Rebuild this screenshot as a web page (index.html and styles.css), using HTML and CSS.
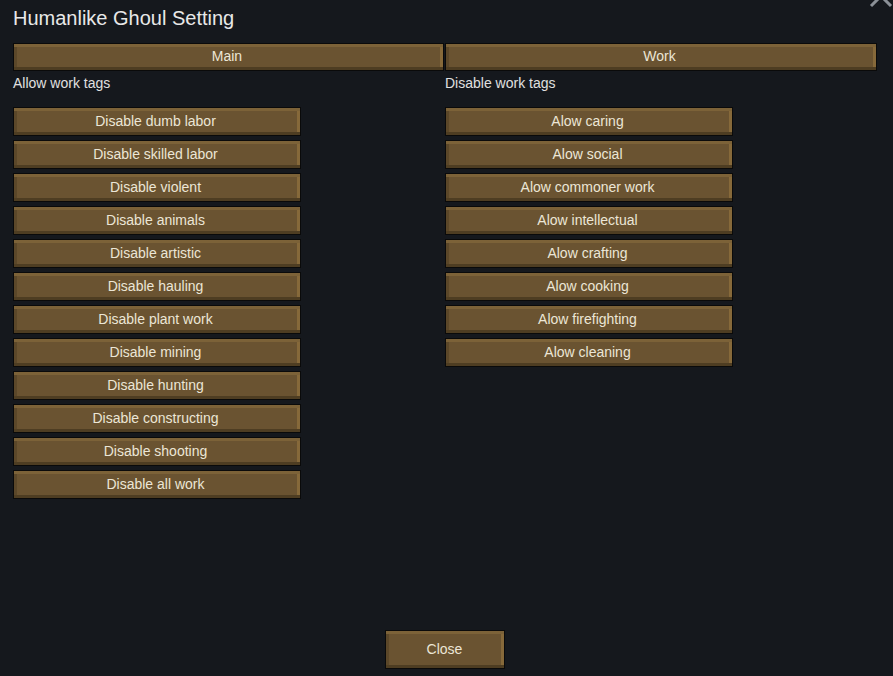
FILE: index.html
```html
<!DOCTYPE html>
<html>
<head>
<meta charset="utf-8">
<link rel="stylesheet" href="styles.css">
</head>
<body>
<div class="window">
  <svg class="close-x" width="24" height="14" viewBox="0 0 24 14"><path d="M2 12 L12 2 L22 12" fill="none" stroke="#8b9097" stroke-width="3"/></svg>
  <h1 class="title">Humanlike Ghoul Setting</h1>
  <div class="columns">
    <div class="col">
      <div class="btn tab">Main</div>
      <div class="label">Allow work tags</div>
      <div class="list">
        <div class="btn item">Disable dumb labor</div>
        <div class="btn item">Disable skilled labor</div>
        <div class="btn item">Disable violent</div>
        <div class="btn item">Disable animals</div>
        <div class="btn item">Disable artistic</div>
        <div class="btn item">Disable hauling</div>
        <div class="btn item">Disable plant work</div>
        <div class="btn item">Disable mining</div>
        <div class="btn item">Disable hunting</div>
        <div class="btn item">Disable constructing</div>
        <div class="btn item">Disable shooting</div>
        <div class="btn item">Disable all work</div>
      </div>
    </div>
    <div class="col">
      <div class="btn tab">Work</div>
      <div class="label">Disable work tags</div>
      <div class="list">
        <div class="btn item">Alow caring</div>
        <div class="btn item">Alow social</div>
        <div class="btn item">Alow commoner work</div>
        <div class="btn item">Alow intellectual</div>
        <div class="btn item">Alow crafting</div>
        <div class="btn item">Alow cooking</div>
        <div class="btn item">Alow firefighting</div>
        <div class="btn item">Alow cleaning</div>
      </div>
    </div>
  </div>
  <div class="footer">
    <div class="btn close">Close</div>
  </div>
</div>
</body>
</html>
```
FILE: styles.css
```css
html, body {
  margin: 0;
  padding: 0;
  background: #15181d;
}
body {
  font-family: "Liberation Sans", Arial, sans-serif;
  color: #e6e3dc;
}
.window {
  position: relative;
  width: 893px;
  height: 676px;
  box-sizing: border-box;
  padding: 6px 16px 7px 13px;
  display: flex;
  flex-direction: column;
  overflow: hidden;
}
.close-x {
  position: absolute;
  right: 0;
  top: -6px;
}
.title {
  margin: 0;
  font-size: 20px;
  font-weight: normal;
  line-height: 24px;
  color: #e8e8e8;
}
.columns {
  margin-top: 13px;
  display: grid;
  grid-template-columns: 432px 432px;
}
.col {
  display: flex;
  flex-direction: column;
}
.btn {
  box-sizing: border-box;
  border: 1px solid #0a0a0a;
  background: #6a5331;
  box-shadow:
    inset 0 3px 0 #7c6238,
    inset 0 -3px 0 #4e3d22,
    inset 3px 0 0 #5b4729,
    inset -3px 0 0 #86693a;
  color: #ece6d6;
  font-size: 14px;
  text-align: center;
  display: flex;
  align-items: center;
  justify-content: center;
  padding: 0 3px 2px 0;
}
.col:first-child .tab {
  margin-right: 1px;
}
.tab {
  height: 28px;
}
.label {
  margin-top: 4px;
  height: 16px;
  line-height: 16px;
  font-size: 14px;
  color: #e0e0e0;
}
.list {
  margin-top: 16px;
  display: flex;
  flex-direction: column;
  gap: 4px;
}
.item {
  width: 288px;
  height: 29px;
}
.footer {
  margin-top: auto;
  display: flex;
  justify-content: center;
  padding-right: 1px;
}
.close {
  width: 120px;
  height: 39px;
  padding: 0 0 2px 0;
}
```
